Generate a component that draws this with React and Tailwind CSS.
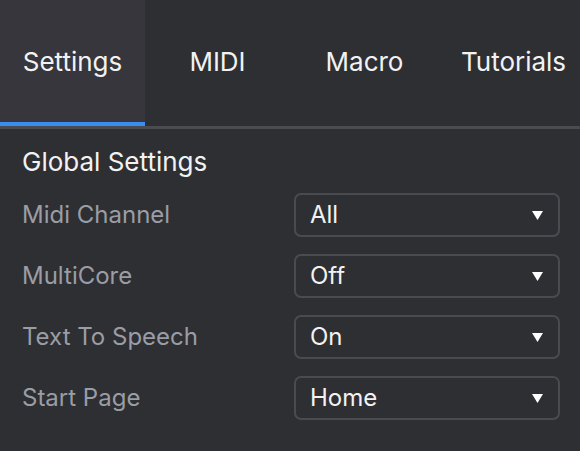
import React, { useState } from 'react';

const tabs = [
  { name: 'Settings', pad: '' },
  { name: 'MIDI', pad: '' },
  { name: 'Macro', pad: 'pl-[4px]' },
  { name: 'Tutorials', pad: 'pl-[12px]' },
];

const settings = [
  { label: 'Midi Channel', value: 'All' },
  { label: 'MultiCore', value: 'Off' },
  { label: 'Text To Speech', value: 'On' },
  { label: 'Start Page', value: 'Home' },
];

const Caret = () => (
  <svg width="11" height="9" viewBox="0 0 11 9" className="shrink-0">
    <path d="M0 0 H11 L5.5 9 Z" fill="#ffffff" />
  </svg>
);

const App = () => {
  const [activeTab, setActiveTab] = useState('Settings');

  return (
    <div
      className="w-[580px] h-[451px] bg-[#2e2f33] text-white overflow-hidden"
      style={{ fontFamily: 'Inter, "Noto Sans", sans-serif' }}
    >
      {/* Tabs */}
      <div className="flex border-b-[3px] border-[#4b4c51]">
        {tabs.map((tab) => (
          <button
            key={tab.name}
            onClick={() => setActiveTab(tab.name)}
            className={`w-[145px] shrink-0 h-[126px] flex items-center justify-center text-[26px] text-[#f2f2f2] border-b-4 ${tab.pad} ${
              activeTab === tab.name ? 'bg-[#36363c] border-[#3a8ef2]' : 'border-transparent'
            }`}
          >
            {tab.name}
          </button>
        ))}
      </div>

      {/* Global Settings */}
      <div className="pl-[22px] pr-[20px] pt-[17px]">
        <h2 className="text-[26px] leading-[32px] text-[#f2f2f2] mb-[15px]">Global Settings</h2>
        <div className="flex flex-col gap-[17px]">
          {settings.map((row) => (
            <div key={row.label} className="flex items-center justify-between h-[44px]">
              <span className="text-[24px] text-[#9a9da5]">{row.label}</span>
              <div className="w-[266px] h-[44px] flex items-center justify-between pl-[14px] pr-[15px] border-2 border-[#4a4b50] rounded-[7px]">
                <span className="text-[24px] text-[#f2f2f2]">{row.value}</span>
                <Caret />
              </div>
            </div>
          ))}
        </div>
      </div>
    </div>
  );
};

export default App;
